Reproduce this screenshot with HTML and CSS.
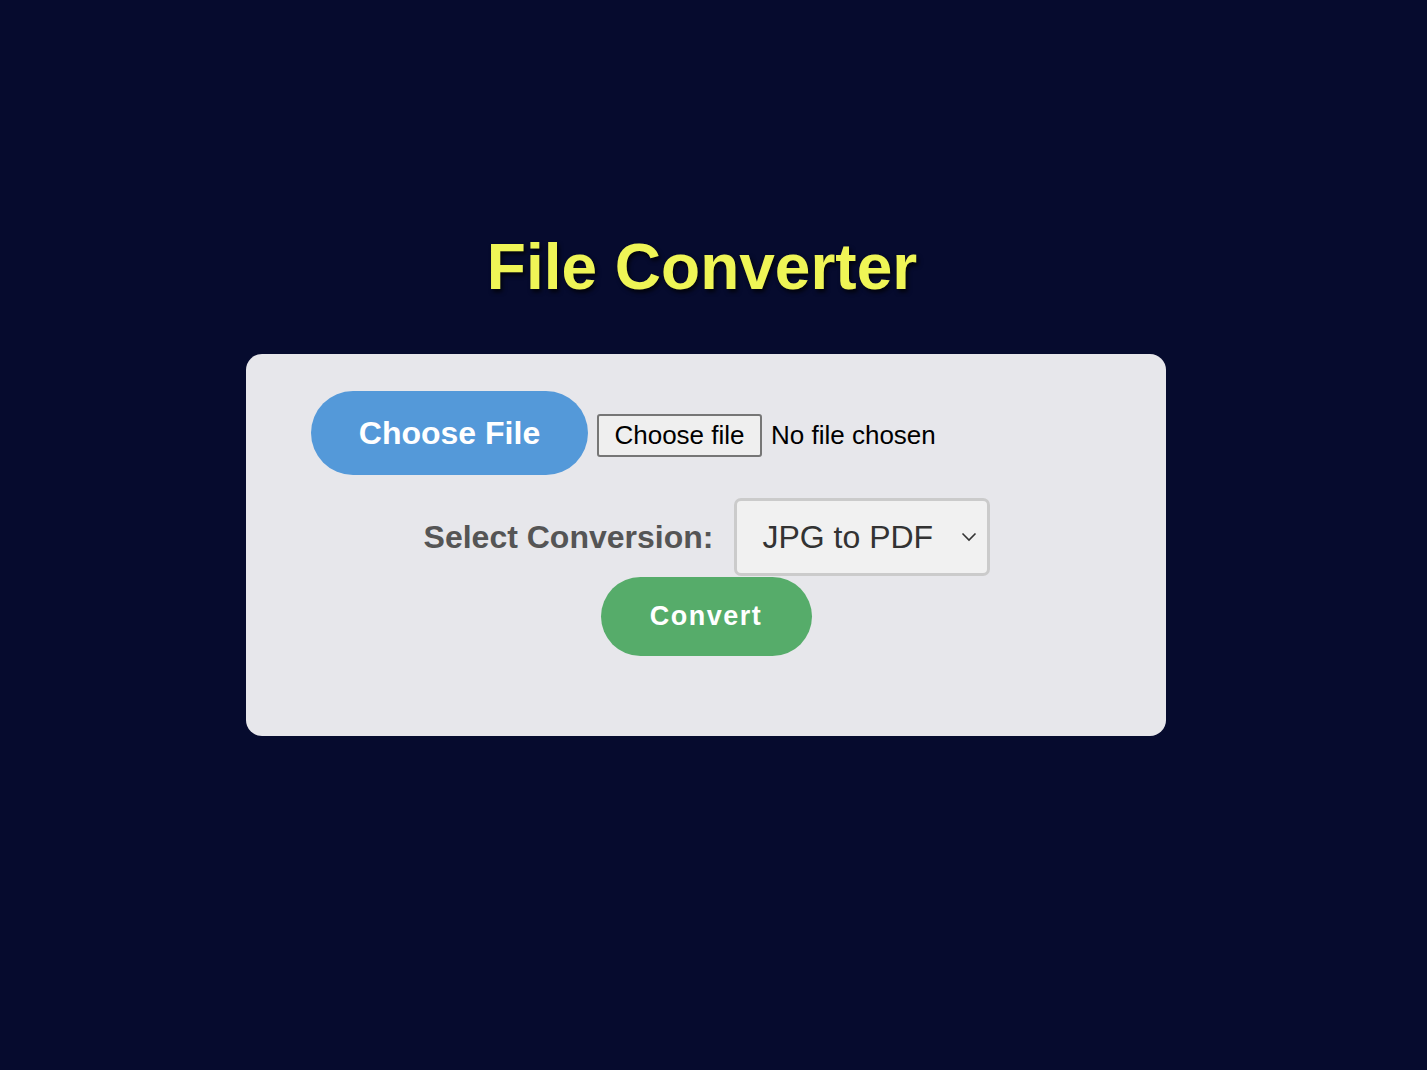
FILE: index.html
```html
<!DOCTYPE html>
<html lang="en">
<head>
<meta charset="utf-8">
<title>File Converter</title>
<link rel="stylesheet" href="styles.css">
</head>
<body>
<main class="page">
  <h1 class="title">File Converter</h1>
  <section class="card">
    <div class="row row-file">
      <label class="pick-btn" for="file">Choose File</label>
      <span class="native-file">
        <span class="native-btn">Choose file</span>
        <span class="native-text">No file chosen</span>
      </span>
    </div>
    <div class="row row-select">
      <span class="select-label">Select Conversion:</span>
      <div class="select">
        <span class="select-value">JPG to PDF</span>
        <svg class="chev" width="16" height="10" viewBox="0 0 16 10"><path d="M1.5 1.5 L8 8 L14.5 1.5" fill="none" stroke="#333" stroke-width="1.6"/></svg>
      </div>
    </div>
    <div class="row row-convert">
      <button class="convert-btn" type="button">Convert</button>
    </div>
  </section>
</main>
</body>
</html>
```
FILE: styles.css
```css
html, body {
  margin: 0;
  padding: 0;
  background: #060b2e;
  font-family: "Liberation Sans", Arial, sans-serif;
}
.page {
  display: flex;
  flex-direction: column;
  align-items: center;
  padding-top: 230px;
  padding-right: 23px;
}
.title {
  margin: 0 0 50px 0;
  font-size: 64px;
  font-weight: 700;
  line-height: 74px;
  color: #eff556;
  text-shadow: 2px 3px 4px rgba(0, 0, 0, 0.75);
}
.card {
  box-sizing: border-box;
  width: 920px;
  height: 382px;
  background: #e7e7eb;
  border-radius: 16px;
  padding: 37px 65px 0 65px;
  margin-left: 8px;
}
.row {
  display: flex;
  align-items: center;
}
.row-file {
  justify-content: flex-start;
  gap: 9px;
}
.pick-btn {
  display: inline-block;
  box-sizing: border-box;
  width: 277px;
  height: 84px;
  line-height: 84px;
  text-align: center;
  background: #5499d9;
  color: #fff;
  font-size: 32px;
  font-weight: 700;
  border-radius: 42px;
}
.native-file {
  display: flex;
  align-items: center;
  gap: 9px;
  margin-top: 4px;
  font-size: 26px;
  color: #000;
}
.native-btn {
  box-sizing: border-box;
  height: 43px;
  width: 165px;
  line-height: 39px;
  text-align: center;
  background: #efefef;
  border: 2px solid #767676;
  border-radius: 3px;
}
.row-select {
  justify-content: center;
  gap: 21px;
  margin-top: 23px;
  padding-left: 2px;
}
.select-label {
  font-size: 32px;
  font-weight: 700;
  color: #555;
}
.select {
  box-sizing: border-box;
  width: 256px;
  height: 78px;
  border: 3px solid #cbcbcb;
  border-radius: 7px;
  background: #f1f1f1;
  display: flex;
  align-items: center;
  justify-content: space-between;
  padding: 0 10px 0 25px;
  color: #333;
  font-size: 32px;
}
.chev {
  display: block;
}
.row-convert {
  justify-content: center;
  margin-top: 1px;
}
.convert-btn {
  box-sizing: border-box;
  width: 211px;
  height: 79px;
  border: none;
  border-radius: 40px;
  background: #56ac6a;
  color: #fff;
  font-family: "Liberation Sans", Arial, sans-serif;
  font-size: 27px;
  font-weight: 700;
  letter-spacing: 1.5px;
  padding: 0;
}
```
